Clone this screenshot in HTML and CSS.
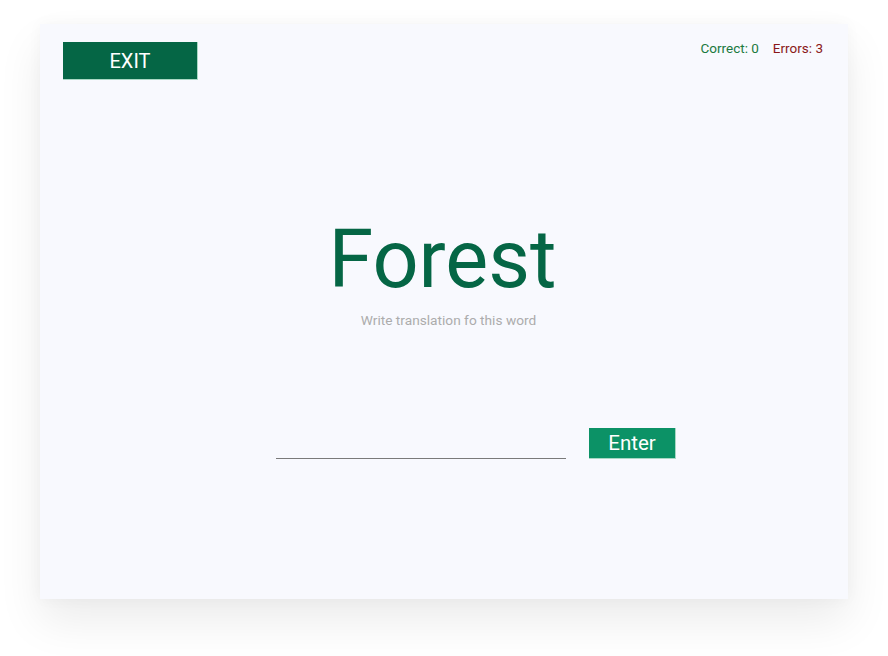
FILE: index.html
```html
<!DOCTYPE html>
<html>
<head>
<meta charset="utf-8">
<link rel="stylesheet" href="styles.css">
</head>
<body>
<div class="card">
  <div class="top">
    <button class="exit">EXIT</button>
    <div class="score"><span class="correct">Correct: 0</span><span class="errors">Errors: 3</span></div>
  </div>
  <div class="word">Forest</div>
  <div class="hint">Write translation fo this word</div>
  <div class="answer">
    <input class="field" type="text">
    <button class="enter">Enter</button>
  </div>
</div>
</body>
</html>
```
FILE: styles.css
```css
html, body {
  margin: 0;
  padding: 0;
  background: #ffffff;
  font-family: Roboto, "Liberation Sans", sans-serif;
}
body {
  padding-bottom: 57px;
}
.card {
  margin: 24px 0 0 40px;
  width: 808px;
  height: 575px;
  box-sizing: border-box;
  background: #f8f9fe;
  box-shadow: 0 22px 42px rgba(0, 0, 0, 0.08), 0 0 14px rgba(0, 0, 0, 0.035);
  padding: 18px 25px 0 23px;
  display: flex;
  flex-direction: column;
}
.top {
  display: flex;
  justify-content: space-between;
  align-items: flex-start;
}
.exit {
  width: 135px;
  height: 38px;
  border: none;
  border-right: 1px solid #a9d8c4;
  border-bottom: 1px solid #a9d8c4;
  background: #056645;
  color: #ffffff;
  font-family: Roboto, sans-serif;
  font-size: 20px;
  padding: 0;
}
.score {
  font-size: 13.5px;
  line-height: 16px;
  margin-top: -2px;
  display: flex;
  gap: 14px;
}
.correct { color: #1b7a3e; }
.errors { color: #8a1818; }
.word {
  margin-top: 130px;
  text-align: center;
  font-size: 81px;
  line-height: 100px;
  color: #056645;
  margin-right: 1px;
}
.hint {
  margin-top: 2px;
  text-align: center;
  font-size: 13.7px;
  line-height: 16px;
  color: #acacac;
  padding-left: 11px;
}
.answer {
  margin-top: 100px;
  display: flex;
  justify-content: center;
  align-items: flex-end;
  gap: 23px;
  padding-left: 66px;
}
.field {
  width: 290px;
  height: 30px;
  box-sizing: border-box;
  border: none;
  border-bottom: 1px solid #7a7a7a;
  background: transparent;
  outline: none;
  padding: 0;
}
.enter {
  width: 87px;
  height: 31px;
  border: none;
  border-right: 1px solid #a9d8c4;
  border-bottom: 1px solid #a9d8c4;
  background: #0c9266;
  color: #ffffff;
  font-family: Roboto, sans-serif;
  font-size: 20.5px;
  padding: 0;
}
```
